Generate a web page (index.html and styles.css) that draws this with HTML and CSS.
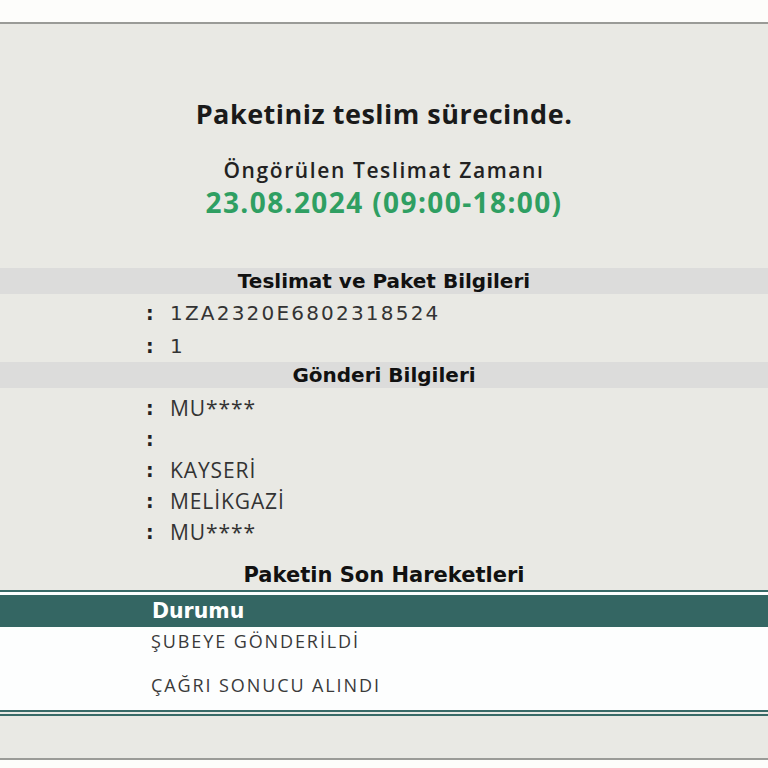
FILE: index.html
```html
<!DOCTYPE html>
<html lang="tr">
<head>
<meta charset="utf-8">
<link rel="stylesheet" href="styles.css">
</head>
<body>
<div class="page">
  <div class="hero">
    <div class="status">Paketiniz teslim sürecinde.</div>
    <div class="eta-label">Öngörülen Teslimat Zamanı</div>
    <div class="eta">23.08.2024 (09:00-18:00)</div>
  </div>
  <div class="sec-title bar">Teslimat ve Paket Bilgileri</div>
  <div class="rows rows-pkg">
    <div class="row"><span class="colon">:</span><span class="val">1ZA2320E6802318524</span></div>
    <div class="row"><span class="colon">:</span><span class="val">1</span></div>
  </div>
  <div class="sec-title bar">Gönderi Bilgileri</div>
  <div class="rows rows-snd">
    <div class="row"><span class="colon">:</span><span class="val">MU****</span></div>
    <div class="row"><span class="colon">:</span><span class="val"></span></div>
    <div class="row"><span class="colon">:</span><span class="val">KAYSERİ</span></div>
    <div class="row"><span class="colon">:</span><span class="val">MELİKGAZİ</span></div>
    <div class="row"><span class="colon">:</span><span class="val">MU****</span></div>
  </div>
  <div class="sec-title plain">Paketin Son Hareketleri</div>
  <div class="moves">
    <div class="moves-head">Durumu</div>
    <div class="move-list">
      <div class="move">ŞUBEYE GÖNDERİLDİ</div>
      <div class="move">ÇAĞRI SONUCU ALINDI</div>
    </div>
  </div>
  <div class="foot"></div>
</div>
</body>
</html>
```
FILE: styles.css
```css
html, body { margin: 0; padding: 0; background: #fdfdfb; }
.page {
  margin-top: 22px;
  border-top: 2px solid #9a9b97;
  border-bottom: 2px solid #9a9b97;
  background: #e9e9e4;
  font-family: "Open Sans", "Lato", sans-serif;
  color: #1a1a1a;
}
.hero { padding: 73px 0 49px; text-align: center; }
.status { font-size: 27px; font-weight: 700; line-height: 34px; color: #1a1a1a; letter-spacing: 0.5px; }
.eta-label { margin-top: 26px; font-size: 21px; font-weight: 600; line-height: 26px; color: #222; letter-spacing: 1.6px; }
.eta { margin-top: 2px; font-size: 28px; font-weight: 700; line-height: 34px; color: #2f9f62; letter-spacing: 1.4px; }
.sec-title {
  font-family: "DejaVu Sans", Verdana, sans-serif;
  font-weight: 700; font-size: 20px; line-height: 26px;
  text-align: center; color: #111;
}
.bar { background: #dcdcdb; }
.rows { padding-left: 146px; }
.row { display: flex; align-items: center; color: #333; }
.colon { width: 24px; font-family: "DejaVu Sans", Verdana, sans-serif; font-weight: 700; font-size: 19px; color: #222; }
.rows-pkg { padding-top: 2px; }
.rows-pkg .row { height: 33px; font-family: "DejaVu Sans", Verdana, sans-serif; font-size: 20px; letter-spacing: 2.2px; }
.rows-snd { padding-top: 4px; }
.rows-snd .row { height: 31px; font-size: 21px; letter-spacing: 0.9px; }
.plain { margin-top: 15px; font-size: 21px; }
.moves {
  margin-top: 2px;
  border-top: 2px solid #386a67;
  border-bottom: 2px solid #386a67;
  background: #fdfefe;
}
.moves-head {
  margin-top: 3px;
  background: #346663;
  color: #fff;
  font-family: "DejaVu Sans", Verdana, sans-serif;
  font-weight: 700; font-size: 20.5px; line-height: 32px;
  padding-left: 152px;
}
.move-list { display: flex; flex-direction: column; gap: 16px; padding-bottom: 11px; }
.move { padding-left: 151px; font-size: 18px; line-height: 28px; color: #3a3a3a; letter-spacing: 1.9px; }
.foot { border-top: 2px solid #386a67; margin-top: 2px; height: 42px; }
```
